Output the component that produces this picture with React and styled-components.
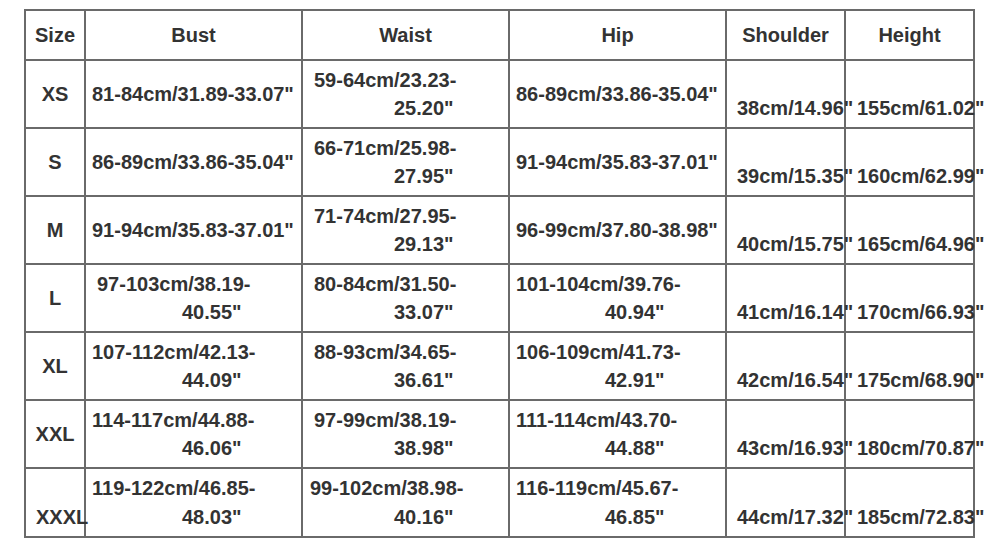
import React from 'react'
import styled, { createGlobalStyle } from 'styled-components'

const GlobalStyle = createGlobalStyle`
  html, body {
    margin: 0;
    padding: 0;
    background: #fff;
  }
  body {
    font-family: 'Liberation Sans', Arial, sans-serif;
  }
`

const line = '#6a6a6a'

const Chart = styled.div`
  display: grid;
  grid-template-columns: 60px 217px 207px 217px 119px 129px;
  grid-template-rows: 50px repeat(6, 68px) 69px;
  width: max-content;
  margin: 9px 0 0 24px;
  border-top: 2px solid ${line};
  border-left: 2px solid ${line};
  color: #333;
  font-size: 20px;
  font-weight: 700;
`

const Box = styled.div`
  box-sizing: border-box;
  min-width: 0;
  display: flex;
  flex-direction: column;
  border-right: 2px solid ${line};
  border-bottom: 2px solid ${line};
  white-space: nowrap;
  line-height: 28.5px;
`

const HeadCell = styled(Box)`
  align-items: center;
  justify-content: center;
`

const Cell = styled(Box)`
  align-items: ${({ $center }) => ($center ? 'center' : 'flex-start')};
  justify-content: ${({ $bottom }) => ($bottom ? 'flex-end' : 'center')};
  padding-bottom: ${({ $bottom }) => ($bottom ? '4.5px' : '0')};
`

const Line = styled.span`
  display: block;
  padding-left: ${({ $pad }) => $pad || 0}px;
`

const headers = ['Size', 'Bust', 'Waist', 'Hip', 'Shoulder', 'Height']

// second line of a wrapped value starts at a fixed offset in each column
const cols = {
  bust: { pad: 6, wrap: 96 },
  waist: { pad: 11, wrap: 91 },
  hip: { pad: 6, wrap: 95 },
}

const rows = [
  {
    size: 'XS',
    bust: ['81-84cm/31.89-33.07"'],
    waist: ['59-64cm/23.23-', '25.20"'],
    hip: ['86-89cm/33.86-35.04"'],
    shoulder: '38cm/14.96"',
    height: '155cm/61.02"',
  },
  {
    size: 'S',
    bust: ['86-89cm/33.86-35.04"'],
    waist: ['66-71cm/25.98-', '27.95"'],
    hip: ['91-94cm/35.83-37.01"'],
    shoulder: '39cm/15.35"',
    height: '160cm/62.99"',
  },
  {
    size: 'M',
    bust: ['91-94cm/35.83-37.01"'],
    waist: ['71-74cm/27.95-', '29.13"'],
    hip: ['96-99cm/37.80-38.98"'],
    shoulder: '40cm/15.75"',
    height: '165cm/64.96"',
  },
  {
    size: 'L',
    bust: ['97-103cm/38.19-', '40.55"'],
    bustPad: 11,
    waist: ['80-84cm/31.50-', '33.07"'],
    hip: ['101-104cm/39.76-', '40.94"'],
    shoulder: '41cm/16.14"',
    height: '170cm/66.93"',
  },
  {
    size: 'XL',
    bust: ['107-112cm/42.13-', '44.09"'],
    waist: ['88-93cm/34.65-', '36.61"'],
    hip: ['106-109cm/41.73-', '42.91"'],
    shoulder: '42cm/16.54"',
    height: '175cm/68.90"',
  },
  {
    size: 'XXL',
    bust: ['114-117cm/44.88-', '46.06"'],
    waist: ['97-99cm/38.19-', '38.98"'],
    hip: ['111-114cm/43.70-', '44.88"'],
    shoulder: '43cm/16.93"',
    height: '180cm/70.87"',
  },
  {
    size: 'XXXL',
    bust: ['119-122cm/46.85-', '48.03"'],
    waist: ['99-102cm/38.98-', '40.16"'],
    waistPad: 7,
    hip: ['116-119cm/45.67-', '46.85"'],
    shoulder: '44cm/17.32"',
    height: '185cm/72.83"',
  },
]

const Measure = ({ lines, col, pad }) => (
  <Cell>
    <Line $pad={pad ?? cols[col].pad}>{lines[0]}</Line>
    {lines[1] && <Line $pad={cols[col].wrap}>{lines[1]}</Line>}
  </Cell>
)

const SizeCell = ({ size }) =>
  size === 'XXXL' ? (
    <Cell $bottom>
      <Line $pad={10}>{size}</Line>
    </Cell>
  ) : (
    <Cell $center>
      <Line>{size}</Line>
    </Cell>
  )

const App = () => {
  return (
    <>
      <GlobalStyle />
      <Chart>
        {headers.map((h) => (
          <HeadCell key={h}>{h}</HeadCell>
        ))}
        {rows.map((r) => (
          <React.Fragment key={r.size}>
            <SizeCell size={r.size} />
            <Measure lines={r.bust} col="bust" pad={r.bustPad} />
            <Measure lines={r.waist} col="waist" pad={r.waistPad} />
            <Measure lines={r.hip} col="hip" />
            <Cell $bottom>
              <Line $pad={10}>{r.shoulder}</Line>
            </Cell>
            <Cell $bottom>
              <Line $pad={11}>{r.height}</Line>
            </Cell>
          </React.Fragment>
        ))}
      </Chart>
    </>
  )
}

export default App
